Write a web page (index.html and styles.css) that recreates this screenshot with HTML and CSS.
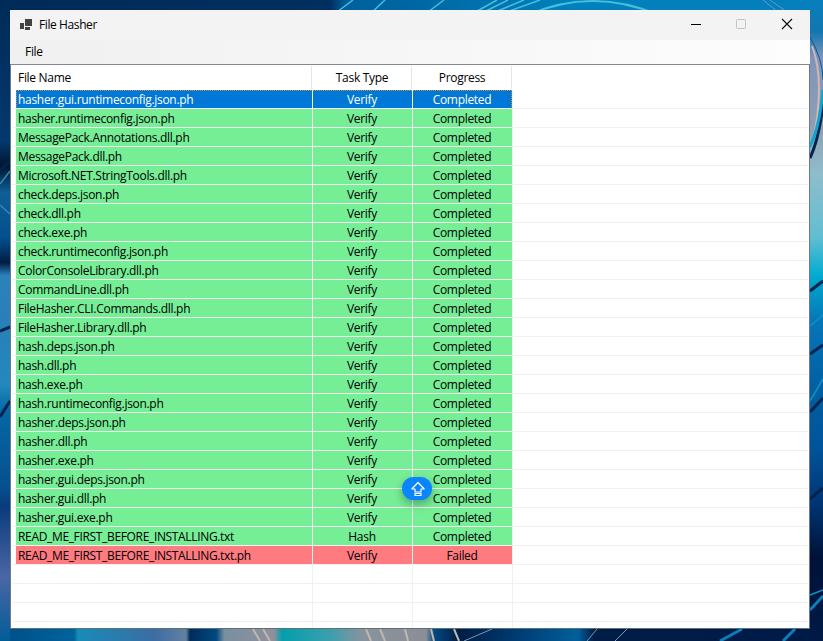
FILE: index.html
```html
<!DOCTYPE html>
<html lang="en">
<head>
<meta charset="utf-8">
<title>File Hasher</title>
<link rel="stylesheet" href="styles.css">
</head>
<body>
<svg class="wallpaper" viewBox="0 0 823 641" aria-hidden="true">
  <defs>
    <linearGradient id="top" x1="0" x2="1" y1="0" y2="0">
      <stop offset="0" stop-color="#002b58"/><stop offset=".4" stop-color="#002f60"/><stop offset=".42" stop-color="#00609c"/><stop offset=".52" stop-color="#0068a5"/><stop offset=".7" stop-color="#0280ba"/><stop offset="1" stop-color="#057fbd"/>
    </linearGradient>
    <linearGradient id="left" x1="0" x2="0" y1="0" y2="1">
      <stop offset="0" stop-color="#002b58"/><stop offset=".22" stop-color="#03396d"/><stop offset=".26" stop-color="#01152f"/><stop offset=".3" stop-color="#0f5f95"/><stop offset=".37" stop-color="#03508d"/><stop offset=".41" stop-color="#001e44"/><stop offset=".43" stop-color="#2b83bb"/><stop offset=".5" stop-color="#2a7fb8"/><stop offset=".6" stop-color="#2389bd"/><stop offset=".64" stop-color="#0568a4"/><stop offset=".76" stop-color="#06508f"/><stop offset=".79" stop-color="#0a3b7b"/><stop offset=".9" stop-color="#4a67a4"/><stop offset="1" stop-color="#005c98"/>
    </linearGradient>
    <linearGradient id="right" x1="0" x2="0" y1="0" y2="1">
      <stop offset="0" stop-color="#087fbd"/><stop offset=".05" stop-color="#1276b0"/><stop offset=".09" stop-color="#7f94bb"/><stop offset=".2" stop-color="#8f9fb4"/><stop offset=".27" stop-color="#8fbdcb"/><stop offset=".37" stop-color="#62bdd2"/><stop offset=".43" stop-color="#00acd0"/><stop offset=".5" stop-color="#0676b9"/><stop offset=".6" stop-color="#0160a3"/><stop offset=".7" stop-color="#01539a"/><stop offset=".79" stop-color="#003371"/><stop offset=".87" stop-color="#001238"/><stop offset="1" stop-color="#001a46"/>
    </linearGradient>
    <linearGradient id="bottom" x1="0" x2="1" y1="0" y2="0">
      <stop offset="0" stop-color="#00508a"/><stop offset=".08" stop-color="#00639c"/><stop offset=".085" stop-color="#178bb7"/><stop offset=".18" stop-color="#3c6da4"/><stop offset=".22" stop-color="#63809f"/><stop offset=".225" stop-color="#002c59"/><stop offset=".258" stop-color="#014a80"/><stop offset=".268" stop-color="#79909f"/><stop offset=".33" stop-color="#918f9b"/><stop offset=".34" stop-color="#039fac"/><stop offset=".4" stop-color="#3b9fae"/><stop offset=".44" stop-color="#87939d"/><stop offset=".52" stop-color="#8c8e94"/><stop offset=".53" stop-color="#004b83"/><stop offset=".56" stop-color="#001d46"/><stop offset=".64" stop-color="#003e76"/><stop offset=".71" stop-color="#00609b"/><stop offset=".73" stop-color="#001d47"/><stop offset="1" stop-color="#001a47"/>
    </linearGradient>
  </defs>
  <rect width="823" height="641" fill="#003566"/>
  <rect width="12" height="641" fill="url(#left)"/>
  <rect x="808" width="15" height="641" fill="url(#right)"/>
  <rect x="10" width="800" height="12" fill="url(#top)"/>
  <rect x="10" y="627" width="800" height="14" fill="url(#bottom)"/>
  <g fill="none" stroke="#45bfde" stroke-width="1.5">
    <path d="M333 15 353 0M369 15 385 0M424 15 444 0M470 15 497 0M478 15 508 0M488 15 524 0M498 15 540 0"/>
    <path d="M528 15Q592-13 659 15" stroke-width="2"/>
    <path d="M763 0 778 12M770 0 787 12" stroke="#5f9fc8" stroke-width="1"/>
    <path d="M0 184 10 171M0 205 10 214" stroke="#2b8cb8"/>
    <path d="M810 37Q823 60 823 80" stroke="#045b98" stroke-width="1"/>
    <path d="M720 641 742 629M783 641 795 629M810 610 823 596" stroke="#087fb9" stroke-width="3"/>
    <path d="M810 595 823 590M810 326 823 315M810 401 823 379" stroke="#0795c4"/>
  </g>
  <path d="M812 46Q826 82 812 146" fill="none" stroke="#d4b7ad" stroke-width="2"/>
  <path d="M823 104Q819 139 810 158" fill="none" stroke="#00264f" stroke-width="3"/>
  <path d="M823 90Q820 125 810 147" fill="none" stroke="#0fa5cf" stroke-width="3"/>
  <path d="M0 170 10 162M0 331 10 327M0 417 10 401M810 291 823 281M810 354 823 345M810 412 823 398M810 499 823 488" fill="none" stroke="#00234d" stroke-width="3"/>
  <path d="M253 629 260 641M263 629 270 641M366 629 371 641M380 629 385 641M405 629 408 641M431 629 434 641M454 629 459 641" fill="none" stroke="#c0b7af" stroke-width="2"/>
  <path d="M587 641 597 629M615 641 627 629M464 641 492 629" fill="none" stroke="#7896ad"/>
</svg>

<main class="window">
  <header class="titlebar">
    <svg class="app-icon" viewBox="0 0 12 12"><path d="M5 0h7v7H5zM0 4h4v6H0zM5 8h5v3H5z" fill="#424242"/></svg>
    <h1 class="title">File Hasher</h1>
    <div class="controls">
      <svg viewBox="0 0 46 30"><path d="M19 14.5h10" stroke="#000"/></svg>
      <svg viewBox="0 0 46 30"><rect x="18.5" y="9.5" width="9" height="9" rx="1" fill="none" stroke="#c2c2c2"/></svg>
      <svg viewBox="0 0 46 30"><path d="m18 9 10 10M28 9 18 19" stroke="#111" stroke-width="1.2"/></svg>
    </div>
  </header>
  <nav class="menubar"><span>File</span></nav>
  <section class="list">
    <div class="row head"><span>File Name</span><span>Task Type</span><span>Progress</span></div>
    <div class="row selected"><span>hasher.gui.runtimeconfig.json.ph</span><span>Verify</span><span>Completed</span><i></i></div>
    <div class="row ok"><span>hasher.runtimeconfig.json.ph</span><span>Verify</span><span>Completed</span><i></i></div>
    <div class="row ok"><span>MessagePack.Annotations.dll.ph</span><span>Verify</span><span>Completed</span><i></i></div>
    <div class="row ok"><span>MessagePack.dll.ph</span><span>Verify</span><span>Completed</span><i></i></div>
    <div class="row ok"><span>Microsoft.NET.StringTools.dll.ph</span><span>Verify</span><span>Completed</span><i></i></div>
    <div class="row ok"><span>check.deps.json.ph</span><span>Verify</span><span>Completed</span><i></i></div>
    <div class="row ok"><span>check.dll.ph</span><span>Verify</span><span>Completed</span><i></i></div>
    <div class="row ok"><span>check.exe.ph</span><span>Verify</span><span>Completed</span><i></i></div>
    <div class="row ok"><span>check.runtimeconfig.json.ph</span><span>Verify</span><span>Completed</span><i></i></div>
    <div class="row ok"><span>ColorConsoleLibrary.dll.ph</span><span>Verify</span><span>Completed</span><i></i></div>
    <div class="row ok"><span>CommandLine.dll.ph</span><span>Verify</span><span>Completed</span><i></i></div>
    <div class="row ok"><span>FileHasher.CLI.Commands.dll.ph</span><span>Verify</span><span>Completed</span><i></i></div>
    <div class="row ok"><span>FileHasher.Library.dll.ph</span><span>Verify</span><span>Completed</span><i></i></div>
    <div class="row ok"><span>hash.deps.json.ph</span><span>Verify</span><span>Completed</span><i></i></div>
    <div class="row ok"><span>hash.dll.ph</span><span>Verify</span><span>Completed</span><i></i></div>
    <div class="row ok"><span>hash.exe.ph</span><span>Verify</span><span>Completed</span><i></i></div>
    <div class="row ok"><span>hash.runtimeconfig.json.ph</span><span>Verify</span><span>Completed</span><i></i></div>
    <div class="row ok"><span>hasher.deps.json.ph</span><span>Verify</span><span>Completed</span><i></i></div>
    <div class="row ok"><span>hasher.dll.ph</span><span>Verify</span><span>Completed</span><i></i></div>
    <div class="row ok"><span>hasher.exe.ph</span><span>Verify</span><span>Completed</span><i></i></div>
    <div class="row ok"><span>hasher.gui.deps.json.ph</span><span>Verify</span><span>Completed</span><i></i></div>
    <div class="row ok"><span>hasher.gui.dll.ph</span><span>Verify</span><span>Completed</span><i></i></div>
    <div class="row ok"><span>hasher.gui.exe.ph</span><span>Verify</span><span>Completed</span><i></i></div>
    <div class="row ok upper"><span>READ_ME_FIRST_BEFORE_INSTALLING.txt</span><span>Hash</span><span>Completed</span><i></i></div>
    <div class="row failed upper"><span>READ_ME_FIRST_BEFORE_INSTALLING.txt.ph</span><span>Verify</span><span>Failed</span><i></i></div>
    <div class="row"><span></span><span></span><span></span><i></i></div>
    <div class="row"><span></span><span></span><span></span><i></i></div>
    <div class="row"><span></span><span></span><span></span><i></i></div>
    <div class="row tail"><span></span><span></span><span></span><i></i></div>
  </section>
</main>
<div class="caps-badge"><svg viewBox="0 0 16 16"><path d="M8 1.5 14.2 8H11v3H5V8H1.800zM5 12.500h6v2H5z" fill="none" stroke="#fff" stroke-width="1.2" stroke-linejoin="round"/></svg></div>
</body>
</html>
```
FILE: styles.css
```css
* { box-sizing: border-box; }
body {
  margin: 0;
  height: 641px;
  padding: 10px;
  overflow: hidden;
  position: relative;
  font: 12px/18px "Open Sans", "Noto Sans", sans-serif;
  letter-spacing: -0.3px;
  color: #000;
}
.wallpaper { position: absolute; inset: 0; width: 823px; height: 641px; }
.window {
  position: relative;
  width: 800px;
  height: 619px;
  display: flex;
  flex-direction: column;
  background: #fff;
}
.titlebar { display: flex; align-items: center; height: 30px; padding-left: 10px; background: #f3f3f3; }
.app-icon { width: 12px; height: 12px; }
.title { margin: 0 0 0 7px; font-size: 12px; font-weight: 400; flex: 1; letter-spacing: -0.4px; }
.controls { display: flex; }
.controls svg { width: 46px; height: 30px; display: block; }
.menubar { height: 24px; padding: 3px 15px; background: linear-gradient(90deg, #f0f0f0, #fdfdfd); }
.list {
  flex: 1;
  min-height: 0;
  overflow: hidden;
  border: 1px solid #707a84;
  border-top-color: #828790;
  border-bottom-color: #60707a;
}
.row {
  display: grid;
  grid-template-columns: 297px 100px 100px 1fr;
  height: 19px;
  margin: 0 1px;
  padding-left: 4px;
  border-bottom: 1px solid #f0f0f0;
}
.row > span {
  height: 18px;
  padding: 1px 1px 0 0;
  border-right: 1px solid #f0f0f0;
  line-height: 18px;
  white-space: pre;
  text-align: center;
}
.row > span:first-child { text-align: left; padding-left: 2px; }
.ok > span { background: #76ee96; }
.failed > span { background: #ff7b80; }
.upper > span:first-child { letter-spacing: -0.34px; }
.selected > span {
  background: repeating-linear-gradient(90deg, #e38735 0 1px, #0078d7 1px 2px) top / 100% 1px no-repeat #0078d7;
  color: #fff;
}
.selected > span:first-child {
  background:
    repeating-linear-gradient(90deg, #e38735 0 1px, #0078d7 1px 2px) top / 100% 1px no-repeat,
    repeating-linear-gradient(180deg, #e38735 0 1px, #0078d7 1px 2px) left / 1px 100% no-repeat #0078d7;
}
.selected > span:nth-child(3) {
  background:
    repeating-linear-gradient(90deg, #e38735 0 1px, #0078d7 1px 2px) top / 100% 1px no-repeat,
    repeating-linear-gradient(180deg, #e38735 0 1px, #0078d7 1px 2px) right / 1px 100% no-repeat #0078d7;
}
.head { height: 25px; border-bottom: 0; padding-top: 1px; grid-template-columns: 296px 100px 100px; }
.head > span { height: 23px; padding: 0 0 0 1px; line-height: 23px; border-right-color: #e5e5e5; }
.tail { height: 6px; border-bottom: 0; }
.tail > span { height: 6px; }
.caps-badge {
  position: absolute;
  left: 402px;
  top: 477px;
  width: 30px;
  height: 23px;
  border-radius: 12px;
  background: #0a84ff;
  box-shadow: 0 4px 10px rgba(0, 0, 0, .3);
  display: grid;
  place-items: center;
}
.caps-badge svg { width: 16px; height: 16px; display: block; margin-left: 1px; }
```
